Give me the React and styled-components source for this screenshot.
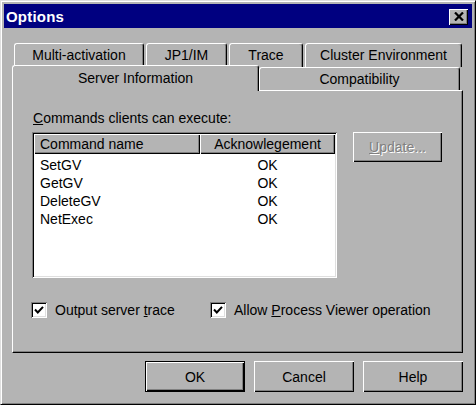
import React from 'react';
import styled, { createGlobalStyle, css } from 'styled-components';

const face = '#b4b4b4';

const GlobalStyle = createGlobalStyle`
    html, body {
        margin: 0;
        padding: 0;
        background: ${face};
    }
    body {
        font-family: "Liberation Sans", Arial, sans-serif;
        font-size: 14px;
        color: #000;
    }
`;

const raised = css`
    box-shadow: inset 1px 1px #fff, inset -1px -1px #000, inset -2px -2px #808080;
`;

const sunken = css`
    box-shadow: inset 1px 1px #808080, inset -1px -1px #fff, inset 2px 2px #000,
        inset -2px -2px #dfdfdf;
`;

const commands = ['SetGV', 'GetGV', 'DeleteGV', 'NetExec'];

const backTabs = [
    { label: 'Multi-activation', width: 130 },
    { label: 'JP1/IM', width: 81 },
    { label: 'Trace', width: 74 },
    { label: 'Cluster Environment', width: 157 },
];

const App = () => {
    return (
        <>
            <GlobalStyle />
            <Window>
                <TitleBar>
                    <Title>Options</Title>
                    <CloseButton aria-label="Close">
                        <svg width="10" height="9" viewBox="0 0 10 9">
                            <path
                                d="M1 0.5 L9 8.5 M9 0.5 L1 8.5"
                                stroke="#000"
                                strokeWidth="2.2"
                            />
                        </svg>
                    </CloseButton>
                </TitleBar>

                <Body>
                    <BackRow>
                        {backTabs.map((t) => (
                            <Tab key={t.label} $width={t.width}>
                                {t.label}
                            </Tab>
                        ))}
                    </BackRow>
                    <FrontRow>
                        <ActiveTab $width={247}>Server Information</ActiveTab>
                        <Tab $width={201}>Compatibility</Tab>
                    </FrontRow>

                    <Panel>
                        <Label>
                            <u>C</u>ommands clients can execute:
                        </Label>
                        <ListRow>
                            <ListView>
                                <Header>
                                    <HeaderCell $width={166}>Command name</HeaderCell>
                                    <HeaderCell $width={135} $center>
                                        Acknowlegement
                                    </HeaderCell>
                                </Header>
                                <Rows>
                                    {commands.map((c) => (
                                        <Row key={c}>
                                            <Cell $width={166}>{c}</Cell>
                                            <Cell $width={135} $center>
                                                OK
                                            </Cell>
                                        </Row>
                                    ))}
                                </Rows>
                            </ListView>
                            <Button $width={89} $height={30} disabled>
                                <u>U</u>pdate...
                            </Button>
                        </ListRow>

                        <CheckRow>
                            <CheckItem $width={179}>
                                <CheckBox />
                                <span>
                                    Output server <u>t</u>race
                                </span>
                            </CheckItem>
                            <CheckItem>
                                <CheckBox />
                                <span>
                                    Allow <u>P</u>rocess Viewer operation
                                </span>
                            </CheckItem>
                        </CheckRow>
                    </Panel>

                    <ButtonRow>
                        <Button $width={100} $height={31} $default>
                            OK
                        </Button>
                        <Button $width={100} $height={31}>
                            Cancel
                        </Button>
                        <Button $width={100} $height={31}>
                            Help
                        </Button>
                    </ButtonRow>
                </Body>
            </Window>
        </>
    );
};

const CheckBox = () => (
    <Box>
        <svg width="10" height="10" viewBox="0 0 10 10">
            <path d="M1 4.5 L3.8 7.5 L9 1.8" fill="none" stroke="#000" strokeWidth="2" />
        </svg>
    </Box>
);

export default App;

const Window = styled.div`
    width: 476px;
    height: 405px;
    box-sizing: border-box;
    border: 1px solid;
    border-color: #dfdfdf #000 #000 #dfdfdf;
    box-shadow: inset 1px 1px #fff, inset -1px -1px #808080;
    padding: 3px;
    background: ${face};
    display: flex;
    flex-direction: column;
`;

const TitleBar = styled.div`
    height: 24px;
    flex: none;
    background: #000080;
    display: flex;
    align-items: center;
    justify-content: space-between;
    padding: 0 4px 0 2px;
`;

const Title = styled.span`
    color: #fff;
    font-weight: 700;
    font-size: 15px;
    letter-spacing: 0.2px;
`;

const CloseButton = styled.div`
    width: 19px;
    height: 16px;
    background: ${face};
    ${raised};
    display: flex;
    align-items: center;
    justify-content: center;
    margin-top: 1px;
`;

const Body = styled.div`
    flex: 1;
    display: flex;
    flex-direction: column;
    padding: 15px 9px 9px 8px;
`;

const BackRow = styled.div`
    display: flex;
    gap: 2px;
    height: 24px;
    padding-left: 2px;
`;

const FrontRow = styled.div`
    display: flex;
    height: 23px;
    align-items: flex-end;
`;

const Tab = styled.div`
    width: ${(p) => p.$width}px;
    height: 100%;
    box-sizing: border-box;
    border-top: 1px solid #fff;
    border-left: 1px solid #fff;
    border-right: 1px solid #000;
    box-shadow: inset -1px 0 #808080;
    border-radius: 3px 3px 0 0;
    display: flex;
    justify-content: center;
    padding-top: 3px;
    background: ${face};
`;

const ActiveTab = styled(Tab)`
    height: 26px;
    margin-top: -2px;
    margin-bottom: -1px;
    position: relative;
    z-index: 1;
    padding-top: 4px;
`;

const Panel = styled.div`
    height: 263px;
    box-sizing: border-box;
    border-top: 1px solid #fff;
    border-left: 1px solid #fff;
    border-right: 1px solid #000;
    border-bottom: 1px solid #000;
    box-shadow: inset -1px -1px #808080;
    padding: 19px 0 0 19px;
    display: flex;
    flex-direction: column;
`;

const Label = styled.div`
    height: 16px;
    line-height: 16px;
    padding-left: 1px;
`;

const ListRow = styled.div`
    display: flex;
    align-items: flex-start;
    gap: 16px;
    margin-top: 6px;
`;

const ListView = styled.div`
    width: 305px;
    height: 146px;
    box-sizing: border-box;
    padding: 2px;
    background: #fff;
    ${sunken};
`;

const Header = styled.div`
    display: flex;
    height: 20px;
`;

const HeaderCell = styled.div`
    width: ${(p) => p.$width}px;
    box-sizing: border-box;
    background: ${face};
    ${raised};
    line-height: 20px;
    padding-left: 6px;
    text-align: ${(p) => (p.$center ? 'center' : 'left')};
    ${(p) => p.$center && 'padding-left: 0;'}
`;

const Rows = styled.div`
    padding-top: 2px;
`;

const Row = styled.div`
    display: flex;
    height: 18px;
    line-height: 18px;
`;

const Cell = styled.div`
    width: ${(p) => p.$width}px;
    box-sizing: border-box;
    padding-left: ${(p) => (p.$center ? 0 : 6)}px;
    text-align: ${(p) => (p.$center ? 'center' : 'left')};
`;

const Button = styled.button`
    width: ${(p) => p.$width}px;
    height: ${(p) => p.$height}px;
    box-sizing: border-box;
    font-family: inherit;
    font-size: 14px;
    color: #000;
    background: ${face};
    border: ${(p) => (p.$default ? '1px solid #000' : 'none')};
    border-radius: 0;
    padding: 0;
    ${raised};
    &:disabled {
        color: #808080;
        text-shadow: 1px 1px #fff;
    }
`;

const CheckRow = styled.div`
    display: flex;
    margin-top: 23px;
    margin-left: -1px;
`;

const CheckItem = styled.label`
    display: flex;
    align-items: center;
    gap: 8px;
    height: 17px;
    ${(p) => p.$width && `width: ${p.$width}px;`}
`;

const Box = styled.span`
    width: 16px;
    height: 16px;
    box-sizing: border-box;
    background: #fff;
    ${sunken};
    display: flex;
    align-items: center;
    justify-content: center;
`;

const ButtonRow = styled.div`
    display: flex;
    justify-content: flex-end;
    gap: 9px;
    margin-top: 8px;
`;
